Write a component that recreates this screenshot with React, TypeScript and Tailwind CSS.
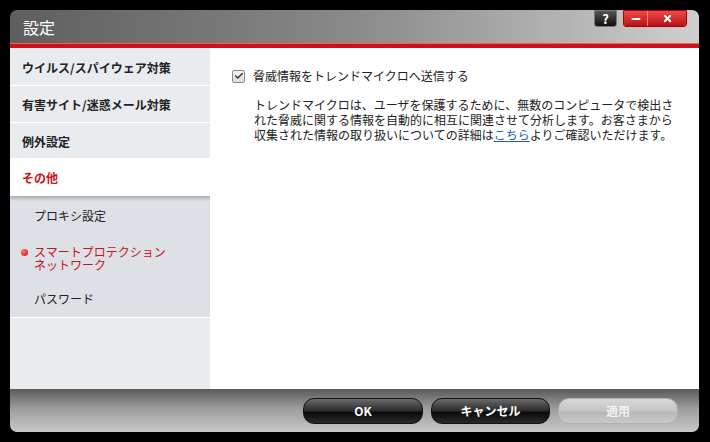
import { Check, Minus, X } from "lucide-react";

const jp = "font-['Noto_Sans_CJK_JP','Noto_Sans',sans-serif]";

const mainItems = [
  { id: "virus", label: "ウイルス/スパイウェア対策", h: "h-[38px]" },
  { id: "web", label: "有害サイト/迷惑メール対策", h: "h-[37px]" },
  { id: "except", label: "例外設定", h: "h-[36px]" },
];

const App = () => {
  return (
    <div className={`h-[442px] w-[710px] bg-black pl-[10px] pt-[10px] ${jp}`}>
      <div className="flex h-[422px] w-[689px] flex-col overflow-hidden rounded-[7px]">
        {/* title bar */}
        <div className="relative flex h-[33px] items-center bg-gradient-to-r from-[#5e5e5e] via-[#8a8a8a] to-[#cfcfcf] pl-[13px]">
          <span className="text-[16px] leading-none text-white">設定</span>
          <div className="absolute right-[12px] top-0 flex gap-[6px]">
            <div className="flex h-[17px] w-[23px] items-center justify-center rounded-b-[3px] border border-[#777] bg-gradient-to-b from-[#555] to-[#111] text-[13px] font-bold leading-none text-white">
              ?
            </div>
            <div className="flex h-[17px] overflow-hidden rounded-b-[3px] border border-[#a00]">
              <div className="flex w-[24px] items-center justify-center border-r border-[#ff8a8a] bg-gradient-to-b from-[#f04848] to-[#b80e14]">
                <Minus className="size-[12px] text-white" strokeWidth={4} />
              </div>
              <div className="flex w-[38px] items-center justify-center bg-gradient-to-b from-[#f04848] to-[#b80e14]">
                <X className="size-[11px] text-white" strokeWidth={4} />
              </div>
            </div>
          </div>
        </div>
        <div className="h-[5px] border-t border-[#f06060] bg-[#cc1218]" />

        {/* content */}
        <div className="flex h-[341px]">
          <div className="flex w-[200px] flex-col bg-[#e9ecef]">
            {mainItems.map((item) => (
              <div
                key={item.id}
                className={`flex ${item.h} items-center border-b border-white pl-[12px] pt-[2px] text-[12px] font-bold text-[#222]`}
              >
                {item.label}
              </div>
            ))}
            <div className="flex h-[37px] items-center bg-white pl-[12px] text-[12px] font-bold text-[#c8141c]">
              その他
            </div>
            <div className="flex h-[121px] flex-col bg-[#dde1e6] bg-[linear-gradient(to_bottom,#a9adb3_0px,#dde1e6_5px)] pt-[4px] text-[12px] text-[#222]">
              <div className="flex h-[31px] items-center pl-[24px]">プロキシ設定</div>
              <div className="flex h-[54px] items-center pl-[11px] text-[#c8141c]">
                <span className="mr-[6px] mt-[-12px] size-[7px] shrink-0 rounded-full bg-[radial-gradient(circle_at_35%_35%,#ff7a7a,#cc0000)]" />
                <span className="leading-[13px]">
                  スマートプロテクション
                  <br />
                  ネットワーク
                </span>
              </div>
              <div className="flex h-[28px] items-center pl-[24px]">パスワード</div>
            </div>
            <div className="flex-1 border-t border-white bg-[#e9ecef]" />
          </div>

          <div className="flex-1 bg-white pl-[22px] pt-[19px] text-[12px] text-[#222]">
            <div className="flex items-center gap-[8px]">
              <div className="flex size-[13px] items-center justify-center rounded-[2px] border border-[#8a8a8a] bg-gradient-to-b from-[#f4f4f4] to-[#dcdcdc]">
                <Check className="size-[10px] text-[#333]" strokeWidth={3.5} />
              </div>
              <span>脅威情報をトレンドマイクロへ送信する</span>
            </div>
            <p className="mt-[12px] w-[446px] pl-[22px] leading-[15px]">
              トレンドマイクロは、ユーザを保護するために、無数のコンピュータで検出された脅威に関する情報を自動的に相互に関連させて分析します。お客さまから収集された情報の取り扱いについての詳細は
              <span className="text-[#1a5fb4] underline">こちら</span>
              よりご確認いただけます。
            </p>
          </div>
        </div>

        {/* footer */}
        <div className="flex h-[43px] items-center justify-end gap-[8px] bg-[linear-gradient(to_bottom,#5a5a5a,#9c9c9c_45%,#c9c9c9)] pr-[21px]">
          <button className="h-[26px] w-[120px] rounded-[11px] border border-[#111] bg-[linear-gradient(to_bottom,#6a6a6a,#2a2a2a_50%,#0a0a0a_55%,#2a2a2a)] text-[12px] font-bold text-white">
            OK
          </button>
          <button className="h-[26px] w-[119px] rounded-[11px] border border-[#111] bg-[linear-gradient(to_bottom,#6a6a6a,#2a2a2a_50%,#0a0a0a_55%,#2a2a2a)] text-[12px] font-bold text-white">
            キャンセル
          </button>
          <button className="h-[26px] w-[120px] rounded-[11px] border border-[#b0b0b0] bg-[linear-gradient(to_bottom,#d8d8d8,#c4c4c4_50%,#b8b8b8_55%,#c8c8c8)] text-[12px] font-bold text-[#f2f2f2]">
            適用
          </button>
        </div>
      </div>
    </div>
  );
};

export default App;
